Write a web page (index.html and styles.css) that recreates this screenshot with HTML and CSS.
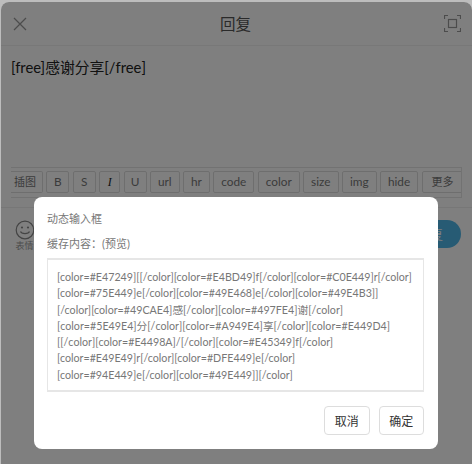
FILE: index.html
```html
<!DOCTYPE html>
<html lang="en">

<head>
    <meta charset="UTF-8">
    <title>回复</title>
    <link rel="stylesheet" href="styles.css">
</head>

<body>
    <div class="sheet">
        <div class="header">
            <svg class="icon-close" width="14" height="14" viewBox="0 0 14 14">
                <path d="M1 1L13 13M13 1L1 13" />
            </svg>
            <div class="title">回复</div>
            <svg class="icon-full" width="17" height="17" viewBox="0 0 17 17">
                <path d="M0.5 4V0.5H4M13 0.5H16.5V4M16.5 13V16.5H13M4 16.5H0.5V13" />
                <rect x="4.5" y="4.5" width="8" height="8" />
            </svg>
        </div>

        <div class="editor">[free]感谢分享[/free]</div>

        <div class="toolbar">
            <div class="tool tool-first">插图</div>
            <div class="tool tool-b">B</div>
            <div class="tool tool-b">S</div>
            <div class="tool tool-i">I</div>
            <div class="tool tool-b">U</div>
            <div class="tool">url</div>
            <div class="tool">hr</div>
            <div class="tool">code</div>
            <div class="tool">color</div>
            <div class="tool">size</div>
            <div class="tool">img</div>
            <div class="tool">hide</div>
            <div class="tool tool-more">更多</div>
        </div>

        <div class="footer">
            <div class="emoji">
                <svg width="20" height="20" viewBox="0 0 20 20">
                    <circle cx="10" cy="10" r="8.8" />
                    <path d="M5.5 11.5C6.5 14.2 13.5 14.2 14.5 11.5" />
                    <circle class="eye" cx="7" cy="7.5" r="1.1" />
                    <circle class="eye" cx="13" cy="7.5" r="1.1" />
                </svg>
                <div class="emoji-label">表情</div>
            </div>
            <div class="send">回复</div>
        </div>
    </div>

    <div class="overlay">
        <div class="dialog">
            <div class="dialog-title">动态输入框</div>
            <div class="dialog-label">缓存内容：(预览)</div>
            <div class="preview">
                [color=#E47249][[/color][color=#E4BD49]f[/color][color=#C0E449]r[/color]<br>
                [color=#75E449]e[/color][color=#49E468]e[/color][color=#49E4B3]]<br>
                [/color][color=#49CAE4]感[/color][color=#497FE4]谢[/color]<br>
                [color=#5E49E4]分[/color][color=#A949E4]享[/color][color=#E449D4]<br>
                [[/color][color=#E4498A]/[/color][color=#E45349]f[/color]<br>
                [color=#E49E49]r[/color][color=#DFE449]e[/color]<br>
                [color=#94E449]e[/color][color=#49E449]][/color]
            </div>
            <div class="actions">
                <button class="btn">取消</button>
                <button class="btn">确定</button>
            </div>
        </div>
    </div>
</body>

</html>
```

FILE: styles.css
```css
* {
    box-sizing: border-box;
}

html,
body {
    height: 100%;
}

body {
    margin: 0;
    overflow: hidden;
    background-color: #bdbdbd;
    color: #333;
    font-family: Lato, "Noto Sans CJK SC", sans-serif;
    padding: 2px 0 0 1px;
}

.sheet {
    height: 100%;
    background-color: #fff;
    border-radius: 8px 8px 0 0;
    display: flex;
    flex-direction: column;
}

.header {
    height: 44px;
    padding: 0 11px 0 12px;
    display: flex;
    align-items: center;
    justify-content: space-between;
    border-bottom: 1px solid #f0f0f0;
}

.icon-close path {
    fill: none;
    stroke: #999;
    stroke-width: 1.3;
}

.icon-full path,
.icon-full rect {
    fill: none;
    stroke: #999;
    stroke-width: 1.2;
}

.title {
    font-size: 15.5px;
    color: #555;
    margin-bottom: 2px;
}

.editor {
    height: 121px;
    padding: 10px 10px;
    font-size: 14.8px;
    line-height: 22px;
    color: #222;
}

.toolbar {
    height: 31px;
    margin: 0 10px;
    border: 1px solid #e4e4e4;
    border-left: none;
    display: flex;
    gap: 3.4px;
    padding-top: 3px;
    overflow: hidden;
}

.tool {
    height: 22px;
    flex-shrink: 0;
    padding: 0 7px;
    border: 1px solid #ddd;
    border-radius: 2px;
    font-size: 11.8px;
    line-height: 20px;
    color: #777;
    background-color: #fff;
}

.tool-first {
    border-left: none;
    border-radius: 0 2px 2px 0;
    padding: 0 6px 0 3px;
    font-size: 11px;
}

.tool-more {
    padding: 0 9px;
    font-size: 11px;
}

.tool-b {
    width: 23px;
    padding: 0;
    text-align: center;
}

.tool-i {
    width: 21px;
    padding: 0;
    text-align: center;
    font-family: "Liberation Serif", serif;
    font-style: italic;
    color: #222;
}

.footer {
    flex: 1;
    margin-top: 9px;
    border-top: 1px solid #eee;
    padding: 12px 11px 0 14px;
    display: flex;
    justify-content: space-between;
    align-items: flex-start;
}

.emoji {
    text-align: center;
    color: #999;
}

.emoji svg {
    display: block;
    margin: 0 auto;
}

.emoji svg circle,
.emoji svg path {
    fill: none;
    stroke: #888;
    stroke-width: 1.2;
}

.emoji svg .eye {
    fill: #888;
    stroke: none;
}

.emoji-label {
    width: 19px;
    font-size: 9px;
    line-height: 12px;
    white-space: nowrap;
}

.send {
    width: 64px;
    height: 28px;
    border-radius: 14px;
    background-color: #4fb6e8;
    color: #fff;
    font-size: 13px;
    line-height: 28px;
    text-align: right;
    padding-right: 18px;
}

.overlay {
    position: absolute;
    inset: 2px 0 0 1px;
    background-color: rgba(0, 0, 0, 0.5);
    border-radius: 8px 8px 0 0;
    display: flex;
    padding: 195px 33px 0;
}

.dialog {
    width: 404px;
    height: 252px;
    background-color: #fff;
    border-radius: 8px;
    padding: 13px 14px 0 13px;
}

.dialog-title {
    font-size: 11px;
    line-height: 17px;
    color: #777;
}

.dialog-label {
    margin-top: 8px;
    font-size: 11px;
    line-height: 17px;
    color: #777;
}

.preview {
    margin-top: 6px;
    height: 134px;
    border: 2px solid #e6e6e6;
    border-width: 2px 1px;
    padding: 9px 9px;
    font-size: 10.7px;
    line-height: 16.3px;
    color: #777;
    white-space: nowrap;
}

.actions {
    margin-top: 14px;
    display: flex;
    justify-content: flex-end;
    gap: 9px;
}

.btn {
    width: 45.5px;
    height: 29px;
    padding: 0;
    background-color: #fff;
    border: 1px solid #ddd;
    border-radius: 4px;
    font-family: inherit;
    font-size: 12px;
    color: #333;
}
```
